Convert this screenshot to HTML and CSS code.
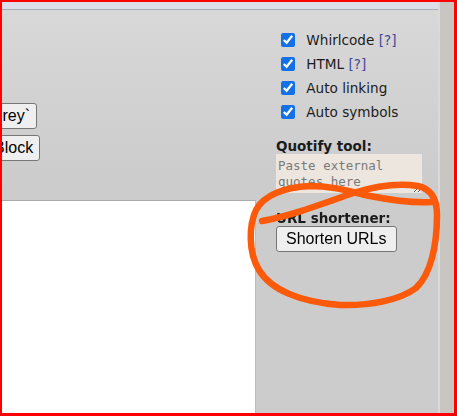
FILE: index.html
```html
<!DOCTYPE html>
<html>
<head>
<meta charset="utf-8">
<link rel="stylesheet" href="styles.css">
</head>
<body>
<div class="frame">
  <div class="main">
    <div class="topbar"></div>
    <div class="content">
      <div class="left">
        <div class="tools">
          <div class="row"><button class="btn btn-grey">Grey`</button></div>
          <div class="row"><button class="btn btn-block">Block</button></div>
        </div>
        <div class="editor"></div>
      </div>
      <div class="side">
        <ul class="opts">
          <li><label><input type="checkbox" checked> Whirlcode <a class="help">[?]</a></label></li>
          <li><label><input type="checkbox" checked> HTML <a class="help">[?]</a></label></li>
          <li><label><input type="checkbox" checked> Auto linking</label></li>
          <li><label><input type="checkbox" checked> Auto symbols</label></li>
        </ul>
        <div class="heading quotify">Quotify tool:</div>
        <textarea class="quotes" placeholder="Paste external quotes here"></textarea>
        <div class="heading shortener">URL shortener:</div>
        <button class="btn shorten">Shorten URLs</button>
      </div>
    </div>
  </div>
  <div class="edge"></div>
  <svg class="scribble" width="457" height="416" viewBox="0 0 457 416">
    <path d="M262,221 C290,216 322,204 353,193 C376,186 400,183 418,186 C432,189 437,200 437,215 C437,245 431,274 416,288 C400,300 370,306 340,305 C300,302 271,290 259,270 C248,252 249,225 256,210 C264,195 285,187 310,186 C335,186 351,192 370,196 C395,201 415,203 432,202" fill="none" stroke="#fb5a0b" stroke-width="6.5" stroke-linecap="round" stroke-linejoin="round"/>
  </svg>
</div>
</body>
</html>
```

FILE: styles.css
```css
* { box-sizing: border-box; }
html, body { margin: 0; padding: 0; }
body { width: 457px; height: 416px; overflow: hidden; background: #fff; }

.frame {
  position: relative;
  width: 457px;
  height: 416px;
  border: 2px solid #ff0000;
  border-right-width: 3px;
  border-bottom-width: 3px;
  display: flex;
  font-family: "DejaVu Sans", Verdana, sans-serif;
  color: #1b1b1b;
}

.main {
  width: 436px;
  display: flex;
  flex-direction: column;
}

.topbar {
  height: 8px;
  background: #dcdee9;
  border-bottom: 1px solid #a9a9b0;
}

.content {
  flex: 1;
  display: flex;
  background: linear-gradient(#d8d8d8 0, #cccccc 170px, #cccccc 100%);
}

.left {
  width: 254px;
  display: flex;
  flex-direction: column;
  overflow: hidden;
}

.tools {
  height: 190px;
  padding-top: 93px;
  display: flex;
  flex-direction: column;
  gap: 6px;
}

.row { display: flex; }

.btn {
  font-family: "Liberation Sans", Arial, sans-serif;
  font-size: 16px;
  line-height: 18px;
  padding: 3px 6px;
  border: 1px solid #767676;
  border-radius: 3px;
  background: #efefef;
  color: #000;
}

.btn-grey { margin-left: -19px; }
.btn-block { margin-left: -15px; }

.editor {
  flex: 1;
  background: #ffffff;
  border-top: 1px solid #ababab;
  border-right: 1px solid #bdbdbd;
}

.side {
  flex: 1;
  padding: 18px 0 0 20px;
  display: flex;
  flex-direction: column;
  align-items: flex-start;
}

.opts {
  list-style: none;
  margin: 0;
  padding: 0;
}

.opts li {
  height: 24px;
  display: flex;
  align-items: center;
  font-size: 13.6px;
}

.opts label {
  display: flex;
  align-items: center;
  white-space: pre;
}

.opts input {
  width: 14px;
  height: 14px;
  margin: 0 7px 0 5px;
  accent-color: #1370e6;
}

.help { color: #45479a; }

.heading {
  font-weight: bold;
  font-size: 13.5px;
  line-height: 15px;
}

.quotify { margin-top: 15px; }

.quotes {
  width: 146px;
  height: 39px;
  border: none;
  background: #ece6df;
  font-family: "DejaVu Sans Mono", monospace;
  font-size: 12.5px;
  line-height: 16px;
  padding: 4px 2px;
  resize: vertical;
  color: #333;
}
.quotes::placeholder { color: #7a7a7a; }

.shortener { margin-top: 17px; line-height: 16px; }

.shorten { padding: 3px 9px; height: 26px; }

.edge {
  flex: 1;
  background: #c9c5c1;
  border-left: 2px solid #dadada;
}

.scribble {
  position: absolute;
  left: -2px;
  top: -2px;
  pointer-events: none;
}
```
